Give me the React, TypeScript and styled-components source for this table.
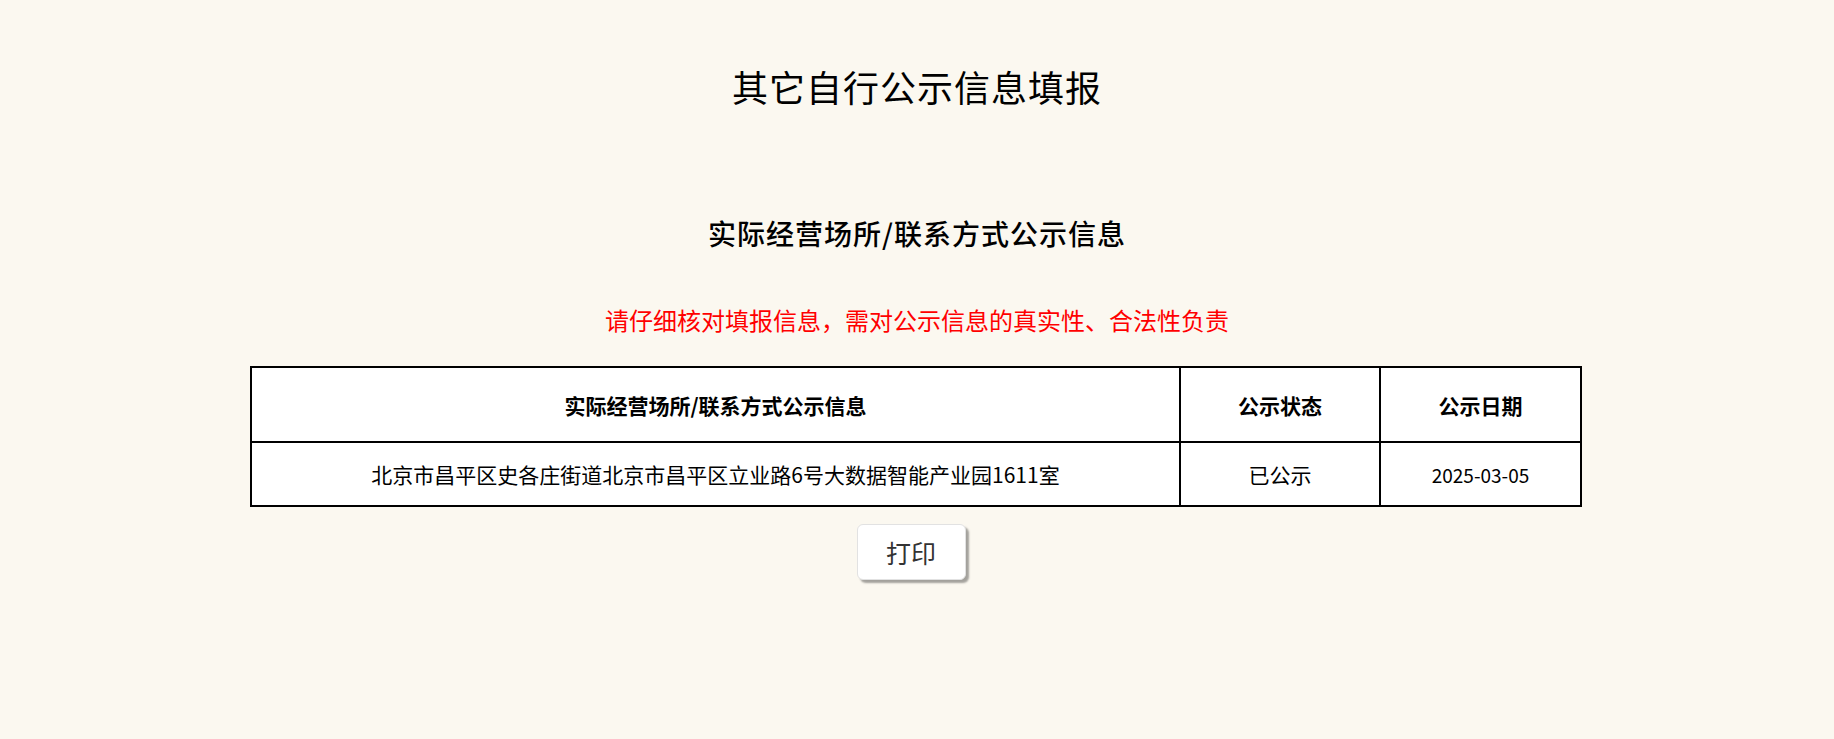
import React from 'react';
import styled, { createGlobalStyle } from 'styled-components';

const GlobalStyle = createGlobalStyle`
  html, body {
    margin: 0;
    padding: 0;
    background-color: #fbf8f0;
  }
  body {
    font-family: "Noto Sans CJK SC", "Liberation Sans", sans-serif;
    color: #000000;
  }
`;

const Page = styled.div`
  min-height: 739px;
  display: flex;
  flex-direction: column;
  align-items: center;
  background-color: #fbf8f0;
`;

const Title = styled.h1`
  margin: 61px 0 0;
  font-size: 36px;
  line-height: 50px;
  font-weight: 400;
  letter-spacing: 1px;
  color: #000000;
`;

const SubTitle = styled.h2`
  margin: 102px 0 0;
  font-size: 28px;
  line-height: 40px;
  font-weight: 500;
  letter-spacing: 1px;
  color: #000000;
`;

const Notice = styled.p`
  margin: 50px 0 0;
  font-size: 24px;
  line-height: 34px;
  color: #ff0000;
`;

const Table = styled.table`
  width: 1332px;
  margin-top: 29px;
  margin-right: 2px;
  border-collapse: collapse;
  background-color: #ffffff;
  table-layout: fixed;
`;

const Th = styled.th<{ w?: number }>`
  width: ${props => (props.w ? `${props.w}px` : 'auto')};
  height: 73px;
  border: 2px solid #000000;
  font-size: 21px;
  font-weight: 700;
  text-align: center;
  padding: 0;
`;

const Td = styled.td<{ small?: boolean }>`
  height: 62px;
  border: 2px solid #000000;
  font-size: ${props => (props.small ? '19px' : '21px')};
  text-align: center;
  padding: 0;
`;

const PrintButton = styled.button`
  margin: 17px 12px 0 0;
  width: 109px;
  height: 56px;
  background-color: #ffffff;
  border: 1px solid #e2e2e2;
  border-radius: 6px;
  box-shadow: 3px 3px 2px rgba(0, 0, 0, 0.35);
  font-family: "Noto Sans CJK SC", "Liberation Sans", sans-serif;
  font-size: 25px;
  color: #333333;
  cursor: pointer;
`;

const App = () => {
  const rows = [
    {
      info: '北京市昌平区史各庄街道北京市昌平区立业路6号大数据智能产业园1611室',
      status: '已公示',
      date: '2025-03-05',
    },
  ];

  return (
    <>
      <GlobalStyle />
      <Page>
        <Title>其它自行公示信息填报</Title>
        <SubTitle>实际经营场所/联系方式公示信息</SubTitle>
        <Notice>请仔细核对填报信息，需对公示信息的真实性、合法性负责</Notice>
        <Table>
          <thead>
            <tr>
              <Th>实际经营场所/联系方式公示信息</Th>
              <Th w={198}>公示状态</Th>
              <Th w={199}>公示日期</Th>
            </tr>
          </thead>
          <tbody>
            {rows.map(row => (
              <tr key={row.info}>
                <Td>{row.info}</Td>
                <Td>{row.status}</Td>
                <Td small>{row.date}</Td>
              </tr>
            ))}
          </tbody>
        </Table>
        <PrintButton type="button" onClick={() => window.print()}>打印</PrintButton>
      </Page>
    </>
  );
};

export default App;
